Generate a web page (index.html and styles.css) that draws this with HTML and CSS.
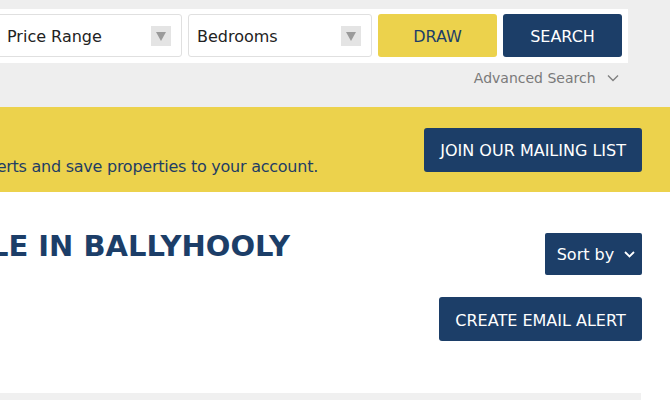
FILE: index.html
```html
<!DOCTYPE html>
<html lang="en">
<head>
    <meta charset="UTF-8">
    <meta name="viewport" content="width=device-width, initial-scale=1.0">
    <title>Property for sale in Ballyhooly</title>

    <link rel="stylesheet" href="styles.css">
</head>
<body>

    <div class="top">
        <div class="search">
            <div class="select select-price">
                <span>Price Range</span>
                <span class="arrow"><span class="tri"></span></span>
            </div>
            <div class="select select-beds">
                <span>Bedrooms</span>
                <span class="arrow"><span class="tri"></span></span>
            </div>
            <button class="btn btn-draw">Draw</button>
            <button class="btn btn-search">Search</button>
        </div>
        <div class="advanced">
            Advanced Search
            <svg width="12" height="8" viewBox="0 0 12 8"><path d="M1 1.5 L6 6.5 L11 1.5" fill="none" stroke="#808080" stroke-width="1.4"/></svg>
        </div>
    </div>

    <div class="band">
        <div class="band-text">
            <span>Register to receive property alerts and save properties to your account.</span>
        </div>
        <button class="btn btn-navy btn-join">Join our mailing list</button>
    </div>

    <div class="results-head">
        <div class="title-box">
            <h1>Property for sale in Ballyhooly</h1>
        </div>
        <button class="btn-navy btn-sort">
            Sort by
            <svg width="11" height="7" viewBox="0 0 11 7"><path d="M1 1 L5.5 5.5 L10 1" fill="none" stroke="#ffffff" stroke-width="1.8"/></svg>
        </button>
    </div>

    <div class="alert-row">
        <button class="btn btn-navy btn-alert">Create email alert</button>
    </div>

    <div class="card"></div>

</body>
</html>
```

FILE: styles.css
```css
body {
    margin: 0;
    font-family: "DejaVu Sans", sans-serif;
    background-color: #fff;
    overflow: hidden;
}
.top {
    background-color: #eeeeee;
    height: 107px;
    padding-top: 9px;
    box-sizing: border-box;
}
.search {
    display: flex;
    gap: 6px;
    background-color: #fff;
    margin-left: -9px;
    width: 637px;
    height: 54px;
    padding: 5px 6px 6px 6px;
    box-sizing: border-box;
}
.select {
    display: flex;
    align-items: center;
    justify-content: space-between;
    border: 1px solid #e0e0e0;
    border-radius: 3px;
    padding: 1px 10px 0 9px;
    font-size: 16px;
    color: #222;
    box-sizing: border-box;
}
.select-price {
    width: 185px;
}
.select-beds {
    width: 184px;
    padding-left: 8px;
}
.arrow {
    width: 20px;
    height: 20px;
    background-color: #e4e4e4;
    display: flex;
    align-items: center;
    justify-content: center;
}
.tri {
    width: 0;
    height: 0;
    border-left: 5px solid transparent;
    border-right: 5px solid transparent;
    border-top: 9px solid #9a9a9a;
}
.btn {
    border: none;
    border-radius: 3px;
    font-family: "DejaVu Sans", sans-serif;
    font-size: 16px;
    text-transform: uppercase;
    padding: 2px 0 0 0;
    cursor: pointer;
}
.btn-draw {
    width: 119px;
    background-color: #ecd24c;
    color: #1c3e68;
}
.btn-search {
    width: 119px;
    background-color: #1c3e68;
    color: #fff;
}
.advanced {
    margin-top: 7px;
    padding-right: 51px;
    text-align: right;
    font-size: 14px;
    color: #7a7a7a;
}
.advanced svg {
    margin-left: 7px;
    vertical-align: 1px;
}
.band {
    background-color: #ecd24c;
    height: 85px;
    display: flex;
    align-items: flex-start;
}
.band-text {
    width: 318px;
    flex-shrink: 0;
    display: flex;
    justify-content: flex-end;
    white-space: nowrap;
    padding-top: 50px;
    font-size: 16px;
    letter-spacing: -0.25px;
    color: #1f3d64;
}
.btn-navy {
    background-color: #1c3e68;
    color: #fff;
}
.btn-join {
    margin-left: auto;
    margin-right: 28px;
    margin-top: 21px;
    height: 44px;
    padding: 1px 16px 0 16px;
}
.results-head {
    display: flex;
    align-items: flex-start;
}
.title-box {
    width: 290px;
    flex-shrink: 0;
    display: flex;
    justify-content: flex-end;
    white-space: nowrap;
}
h1 {
    margin: 37px 0 0 0;
    font-size: 29px;
    font-weight: bold;
    text-transform: uppercase;
    color: #1c3e68;
}
.btn-sort {
    margin-left: auto;
    margin-right: 28px;
    margin-top: 41px;
    width: 97px;
    height: 42px;
    border: none;
    border-radius: 2px;
    font-family: "DejaVu Sans", sans-serif;
    font-size: 16px;
    padding: 1px 0 0 5px;
}
.btn-sort svg {
    margin-left: 5px;
    vertical-align: 2px;
}
.alert-row {
    display: flex;
    justify-content: flex-end;
    padding-right: 28px;
    margin-top: 22px;
}
.btn-alert {
    width: 203px;
    height: 44px;
}
.card {
    margin-top: 52px;
    margin-right: 29px;
    height: 10px;
    background-color: #f0f0f0;
}
```
